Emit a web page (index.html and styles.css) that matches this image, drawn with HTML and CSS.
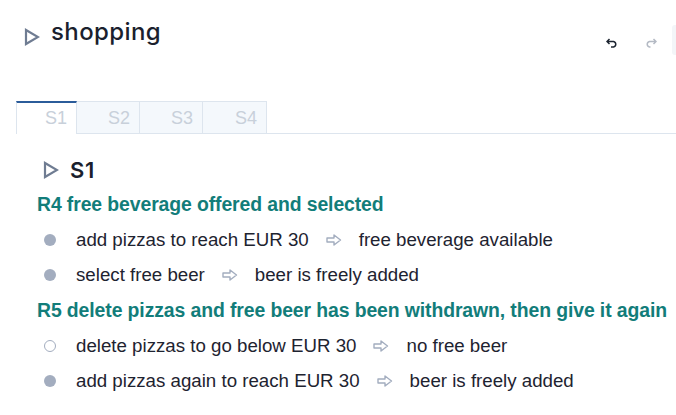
FILE: index.html
```html
<!DOCTYPE html>
<html>
<head>
<meta charset="utf-8">
<link rel="stylesheet" href="styles.css">
</head>
<body>
<div class="page">
  <header class="top">
    <div class="title">
      <svg class="tri tri-big" viewBox="0 0 16 18" width="16" height="18"><path d="M2 2 L14 9 L2 16 Z" fill="none" stroke="#6f7c92" stroke-width="2.2" stroke-linejoin="miter"/></svg>
      <h1>shopping</h1>
    </div>
    <div class="actions">
      <svg class="ic" viewBox="0 0 12 10" width="12" height="10"><path d="M3.5 1 L1 3.5 L3.5 6 M1 3.5 H7.5 A2.8 2.8 0 0 1 7.5 9 H5" fill="none" stroke="#1c2430" stroke-width="1.5"/></svg>
      <svg class="ic" viewBox="0 0 12 10" width="12" height="10"><path d="M8.5 1 L11 3.5 L8.5 6 M11 3.5 H4.5 A2.8 2.8 0 0 0 4.5 9 H5.5" fill="none" stroke="#b4bac4" stroke-width="1.5"/></svg>
      <div class="edge"></div>
    </div>
  </header>
  <nav class="tabs">
    <div class="tab active">S1</div>
    <div class="tab">S2</div>
    <div class="tab">S3</div>
    <div class="tab">S4</div>
    <div class="tab-fill"></div>
  </nav>
  <section class="content">
    <div class="scen">
      <svg class="tri" viewBox="0 0 16 18" width="16" height="18"><path d="M2 2 L14 9 L2 16 Z" fill="none" stroke="#6f7c92" stroke-width="2.2"/></svg>
      <h2>S1</h2>
    </div>
    <h3 class="rule first">R4 free beverage offered and selected</h3>
    <ul class="steps">
      <li><span class="dot"></span><span>add pizzas to reach EUR 30</span><svg class="arr" viewBox="0 0 16 12" width="16" height="12"><path d="M1 4 H8 V1 L14.5 6 L8 11 V8 H1 Z" fill="none" stroke="#a3adbf" stroke-width="1.4" stroke-linejoin="round"/></svg><span>free beverage available</span></li>
      <li><span class="dot"></span><span>select free beer</span><svg class="arr" viewBox="0 0 16 12" width="16" height="12"><path d="M1 4 H8 V1 L14.5 6 L8 11 V8 H1 Z" fill="none" stroke="#a3adbf" stroke-width="1.4" stroke-linejoin="round"/></svg><span>beer is freely added</span></li>
    </ul>
    <h3 class="rule">R5 delete pizzas and free beer has been withdrawn, then give it again</h3>
    <ul class="steps">
      <li><span class="dot hollow"></span><span>delete pizzas to go below EUR 30</span><svg class="arr" viewBox="0 0 16 12" width="16" height="12"><path d="M1 4 H8 V1 L14.5 6 L8 11 V8 H1 Z" fill="none" stroke="#a3adbf" stroke-width="1.4" stroke-linejoin="round"/></svg><span>no free beer</span></li>
      <li><span class="dot"></span><span>add pizzas again to reach EUR 30</span><svg class="arr" viewBox="0 0 16 12" width="16" height="12"><path d="M1 4 H8 V1 L14.5 6 L8 11 V8 H1 Z" fill="none" stroke="#a3adbf" stroke-width="1.4" stroke-linejoin="round"/></svg><span>beer is freely added</span></li>
    </ul>
  </section>
</div>
</body>
</html>
```

FILE: styles.css
```css
* { box-sizing: border-box; }
html, body { margin: 0; padding: 0; background: #fff; }
body { font-family: "Liberation Sans", Arial, sans-serif; color: #1e2330; overflow: hidden; }
.page { width: 676px; height: 415px; }
.top { display: flex; justify-content: space-between; align-items: flex-start; height: 101px; }
.title { display: flex; align-items: center; gap: 11px; padding: 17px 0 0 24px; }
.tri-big { margin-top: 9px; }
h1 { margin: 0; font-family: Inter, "Open Sans", sans-serif; font-weight: 500; font-size: 24px; letter-spacing: 0.4px; color: #1b1f2e; line-height: 30px; }
.actions { display: flex; align-items: center; gap: 27px; padding-top: 31px; }
.actions .ic { display: block; }
.edge { width: 4px; height: 30px; background: #f3f5f8; border-radius: 3px 0 0 3px; margin-top: -6px; margin-left: -12px; }
.tabs { display: flex; padding-left: 16px; height: 33px; }
.tab { width: 62px; height: 33px; border: 1px solid #dde5ee; border-left: none; background: #f4f8fc; color: #c8d0da; font-size: 18px; text-align: right; padding: 6px 9px 0 0; }
.tab:nth-child(2) { width: 63px; }
.tab:nth-child(3) { width: 63px; }
.tab:nth-child(4) { width: 64px; }
.tab.active { width: 61px; background: #fff; border-left: 1px solid #dde5ee; border-top: 2px solid #2b5c9a; border-bottom: none; padding-top: 5px; }
.tab-fill { flex: 1; border-bottom: 1px solid #dde5ee; }
.content { padding: 25px 0 0 37px; }
.scen { display: flex; align-items: center; gap: 11px; padding-left: 6px; height: 22px; }
h2 { margin: 0; font-family: Inter, "Open Sans", sans-serif; font-weight: 600; font-size: 22px; letter-spacing: 0.8px; color: #1b1f2e; }
.rule { margin: 8px 0 0; font-size: 19.4px; font-weight: bold; color: #127d7a; line-height: 20px; letter-spacing: -0.1px; }
.rule.first { margin-top: 13px; }
.steps { list-style: none; margin: 8px 0 0; padding: 0 0 0 7px; }
.steps li { display: flex; align-items: center; height: 35px; font-size: 18.7px; color: #1e2330; }
.dot { flex-shrink: 0; width: 12px; height: 12px; border-radius: 50%; background: #a3adbf; margin-right: 20px; }
.dot.hollow { background: #fff; border: 1.5px solid #a3adbf; }
.arr { flex-shrink: 0; margin: 0 17px; }
```
